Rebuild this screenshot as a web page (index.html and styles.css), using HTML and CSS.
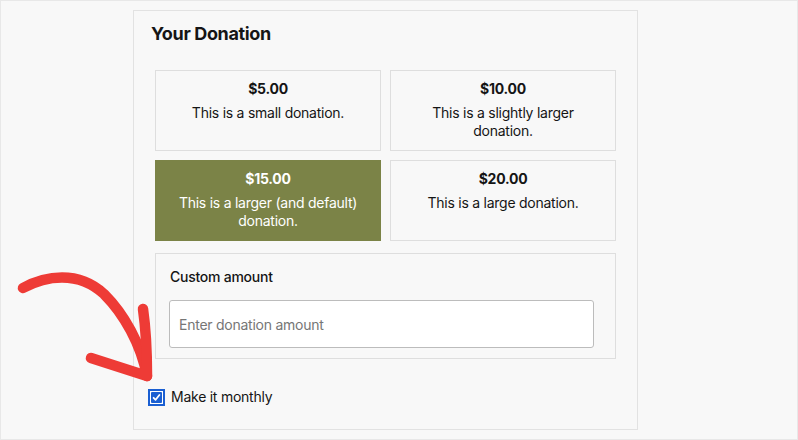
FILE: index.html
```html
<!DOCTYPE html>
<html lang="en">
<head>
  <meta charset="UTF-8">
  <meta name="viewport" content="width=device-width, initial-scale=1.0">
  <title>Your Donation</title>
  <link rel="stylesheet" href="styles.css">
</head>
<body>
  <div class="frame">
    <form class="donation">
      <h2 class="donation-title">Your Donation</h2>

      <div class="levels">
        <div class="level">
          <strong>$5.00</strong>
          <p>This is a small donation.</p>
        </div>
        <div class="level">
          <strong>$10.00</strong>
          <p>This is a slightly larger donation.</p>
        </div>
        <div class="level selected">
          <strong>$15.00</strong>
          <p>This is a larger (and default) donation.</p>
        </div>
        <div class="level">
          <strong>$20.00</strong>
          <p>This is a large donation.</p>
        </div>
      </div>

      <div class="custom">
        <label for="customAmount">Custom amount</label>
        <input type="text" id="customAmount" placeholder="Enter donation amount">
      </div>

      <label class="monthly">
        <span class="check">
          <svg width="17" height="17" viewBox="0 0 17 17">
            <rect x="1" y="1" width="15" height="15" fill="#fff" stroke="#1a5fd2" stroke-width="2"/>
            <rect x="3" y="3" width="11" height="11" rx="1" fill="#1a5fd2"/>
            <path d="M5.6 8.8 L7.6 10.8 L11.4 6" fill="none" stroke="#fff" stroke-width="1.8" stroke-linecap="round" stroke-linejoin="round"/>
          </svg>
        </span>
        Make it monthly
      </label>
    </form>

    <!-- arrow annotation -->
    <svg class="arrow" width="798" height="440" viewBox="0 0 798 440">
      <path d="M23 288 C 45 276, 78 270, 104 294 C 124 314, 141 344, 147 376" fill="none" stroke="#ee3b36" stroke-width="10.5" stroke-linecap="round"/>
      <path d="M143 309 C 146 330, 147 355, 147 376 L 91 358" fill="none" stroke="#ee3b36" stroke-width="10.5" stroke-linecap="round" stroke-linejoin="round"/>
    </svg>
  </div>
</body>
</html>
```

FILE: styles.css
```css
/* base */
body {
  margin: 0;
  font-family: 'Inter', 'Liberation Sans', sans-serif;
  color: #151515;
  background-color: #f8f8f8;
  letter-spacing: -0.25px;
}

.frame {
  position: relative;
  box-sizing: border-box;
  height: 440px;
  padding-top: 9px;
  border: 1px solid #e8e8e8;
  background-color: #f8f8f8;
}

/* donation panel */
.donation {
  box-sizing: border-box;
  width: 505px;
  height: 420px;
  margin-left: 132px;
  padding-top: 12px;
  border: 1px solid #e2e2e2;
}

.donation-title {
  margin: 0 0 25px 17px;
  font-size: 18px;
  line-height: 22px;
  font-weight: 700;
  letter-spacing: -0.35px;
}

.levels {
  display: grid;
  grid-template-columns: 226px 226px;
  grid-auto-rows: 81px;
  gap: 9px;
  margin-left: 21px;
}

.level {
  box-sizing: border-box;
  padding: 9px 12px 0;
  border: 1px solid #dedede;
  text-align: center;
  font-size: 14px;
  line-height: 18px;
}

.level strong {
  display: block;
  margin-bottom: 6px;
  font-weight: 700;
}

.level p {
  margin: 0;
}

.level.selected {
  background-color: #7b8347;
  border-color: #7b8347;
  color: #fff;
}

/* custom amount */
.custom {
  box-sizing: border-box;
  width: 461px;
  height: 106px;
  margin: 12px 0 0 21px;
  padding: 14px 0 0 13px;
  border: 1px solid #dedede;
}

.custom label {
  display: block;
  padding-left: 1px;
  font-size: 14px;
  line-height: 18px;
  font-weight: 500;
  margin-bottom: 14px;
}

.custom input {
  box-sizing: border-box;
  width: 425px;
  height: 48px;
  padding: 0 9px;
  border: 1px solid #bcbcbc;
  border-radius: 3px;
  background: #fff;
  font-family: inherit;
  font-size: 14px;
  letter-spacing: -0.25px;
  color: #222;
}

.custom input::placeholder {
  color: #767676;
}

/* monthly checkbox */
.monthly {
  display: flex;
  align-items: center;
  gap: 6px;
  margin: 29px 0 0 14px;
  font-size: 14px;
  line-height: 18px;
}

.check {
  display: block;
  width: 17px;
  height: 17px;
}

.check svg {
  display: block;
}

.arrow {
  position: absolute;
  top: -1px;
  left: -1px;
  pointer-events: none;
}
```
